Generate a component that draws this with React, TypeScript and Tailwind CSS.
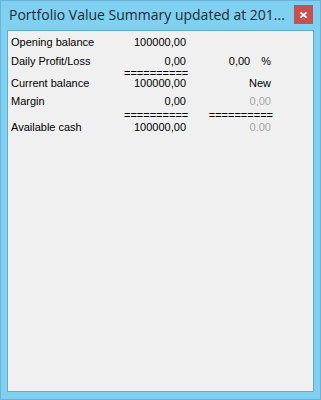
import React from 'react';

const rowText = "text-[11px] text-black";

const Row: React.FC<{
  label?: string;
  value?: React.ReactNode;
  extra?: React.ReactNode;
  h: string;
  lead?: string;
}> = ({ label, value, extra, h, lead = "leading-[13px]" }) => (
  <div className={`flex ${h} ${lead} ${rowText}`}>
    <div className="w-[113px] whitespace-nowrap">{label}</div>
    <div className="w-[62px] text-right whitespace-nowrap">{value}</div>
    <div className="w-[85px] text-right whitespace-nowrap">{extra}</div>
  </div>
);

export default function App() {
  return (
    <div
      className="w-[321px] h-[400px] bg-[#80d0f1] border border-[#6cb2d6] flex flex-col"
      style={{ fontFamily: '"Liberation Sans", Arial, sans-serif' }}
    >
      {/* title bar */}
      <div className="h-[29px] flex items-start">
        <div
          className="pl-[8px] pt-[4px] text-[14px] leading-[20px] text-[#1e2a30] whitespace-nowrap flex-1 overflow-hidden"
          style={{ fontFamily: '"Open Sans", "Noto Sans", sans-serif' }}
        >
          Portfolio Value Summary updated at 201...
        </div>
        <div className="shrink-0 mt-[4px] mr-[7px] w-[19px] h-[19px] bg-[#c75050] flex items-center justify-center">
          <svg width="7" height="6" viewBox="0 0 7 6">
            <path d="M0.5 0.5 L6.5 5.5 M6.5 0.5 L0.5 5.5" stroke="#fff" strokeWidth="1.8" />
          </svg>
        </div>
      </div>

      {/* content */}
      <div className="ml-[6px] mr-[6px] h-[362px] bg-[#f0f0f0] border border-[#65a9cc] pl-[3px] pt-[5px]">
        <Row h="h-[19px]" label="Opening balance" value="100000,00" />
        <Row
          h="h-[14px]"
          label="Daily Profit/Loss"
          value="0,00"
          extra={
            <span className="inline-flex">
              <span>0,00</span>
              <span className="ml-[11px]">%</span>
            </span>
          }
        />
        <Row
          h="h-[8px]"
          lead="leading-[8px]"
          value={<span className="mr-[2px]">==========</span>}
        />
        <Row h="h-[18px]" label="Current balance" value="100000,00" extra="New" />
        <Row
          h="h-[16px]"
          label="Margin"
          value="0,00"
          extra={<span className="text-[#a6a6a6]">0,00</span>}
        />
        <Row
          h="h-[10px]"
          lead="leading-[8px]"
          value={<span className="mr-[2px]">==========</span>}
          extra={<span className="mr-[-2px]">==========</span>}
        />
        <Row
          h="h-[13px]"
          label="Available cash"
          value="100000,00"
          extra={<span className="text-[#a6a6a6]">0.00</span>}
        />
      </div>
    </div>
  );
}
